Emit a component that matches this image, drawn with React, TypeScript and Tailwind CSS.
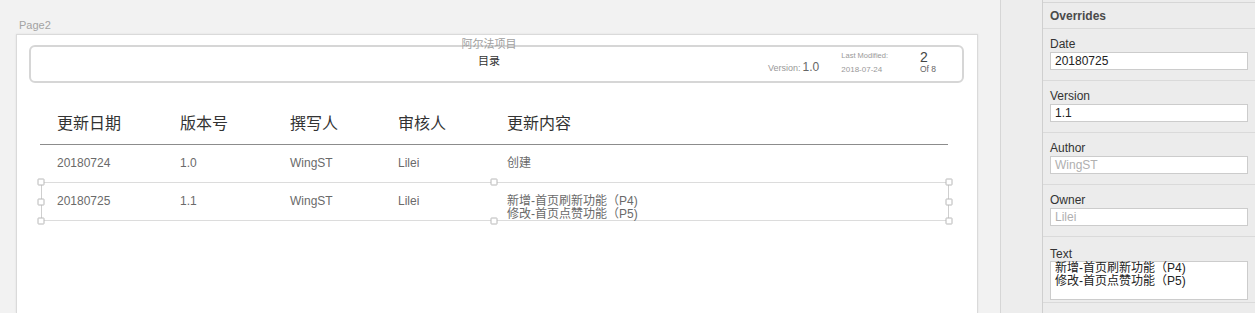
import React from "react";

const FONT = '"Liberation Sans", "Noto Sans CJK SC", sans-serif';

const columns = [
  { key: "date", label: "更新日期", width: "w-[123px]" },
  { key: "version", label: "版本号", width: "w-[110px]" },
  { key: "author", label: "撰写人", width: "w-[108px]" },
  { key: "owner", label: "审核人", width: "w-[109px]" },
  { key: "text", label: "更新内容", width: "flex-1" },
];

const rows = [
  { date: "20180724", version: "1.0", author: "WingST", owner: "Lilei", text: ["创建"] },
  {
    date: "20180725",
    version: "1.1",
    author: "WingST",
    owner: "Lilei",
    text: ["新增-首页刷新功能（P4)", "修改-首页点赞功能（P5)"],
  },
];

function Handle({ className }: { className: string }) {
  return (
    <span
      className={`absolute h-[7px] w-[7px] -translate-x-1/2 -translate-y-1/2 rounded-[1px] border border-[#b8b8b8] bg-white ${className}`}
    />
  );
}

function DocHeader() {
  return (
    <div className="ml-[12px] mr-[13px] mt-[10px] flex h-[38px] items-stretch rounded-[6px] border-2 border-[#d6d6d6]">
      <div className="w-[388px] shrink-0" />
      <div className="-mt-[10px] flex w-[140px] shrink-0 flex-col items-center">
        <span className="text-[11px] leading-[14px] text-[#a0a0a0]">阿尔法项目</span>
        <span className="mt-[3px] text-[11px] leading-[14px] text-[#333]">目录</span>
      </div>
      <div className="flex flex-1 items-end justify-end pb-[6px] pr-[24px]">
        <div className="mr-[22px] flex items-baseline gap-[2px]">
          <span className="text-[9px] text-[#999]">Version:</span>
          <span className="text-[12px] leading-[14px] text-[#666]">1.0</span>
        </div>
        <div className="mr-[32px] flex flex-col pb-[1px]">
          <span className="text-[7.5px] leading-[9px] text-[#999]">Last Modified:</span>
          <span className="mt-[5px] text-[8px] leading-[9px] text-[#999]">2018-07-24</span>
        </div>
        <div className="flex w-[18px] flex-col pb-[1px]">
          <span className="text-[14px] leading-[14px] text-[#444]">2</span>
          <span className="whitespace-nowrap text-[8.5px] leading-[10px] text-[#666]">Of 8</span>
        </div>
      </div>
    </div>
  );
}

function ChangeTable() {
  return (
    <div className="ml-[23px] mt-[31px] w-[908px]">
      <div className="flex border-b border-[#8c8c8c] pb-[10px] pl-[17px]">
        {columns.map((c) => (
          <div key={c.key} className={`${c.width} text-[16px] leading-[20px] text-[#333]`}>
            {c.label}
          </div>
        ))}
      </div>
      {rows.map((r, i) => {
        const selected = i === 1;
        return (
          <div
            key={r.date}
            className={`relative flex h-[38px] border-b border-[#dcdcdc] pl-[17px] text-[12px] text-[#6a6a6a] ${
              selected ? "pt-[12px]" : "pt-[10px]"
            }`}
          >
            {columns.map((c) => (
              <div key={c.key} className={`${c.width} ${selected ? "leading-[13px]" : "leading-[16px]"}`}>
                {c.key === "text"
                  ? r.text.map((t) => <div key={t}>{t}</div>)
                  : (r as Record<string, string | string[]>)[c.key]}
              </div>
            ))}
            {selected ? (
              <div className="pointer-events-none absolute -top-[1px] bottom-[-1px] left-[1px] right-[-1px]">
                <span className="absolute bottom-0 left-0 top-0 w-px bg-[#cfcfcf]" />
                <span className="absolute bottom-0 right-0 top-0 w-px bg-[#cfcfcf]" />
                <Handle className="left-0 top-0" />
                <Handle className="left-0 top-1/2" />
                <Handle className="left-0 top-full" />
                <Handle className="left-[453px] top-0" />
                <Handle className="left-[453px] top-full" />
                <Handle className="left-full top-0" />
                <Handle className="left-full top-1/2" />
                <Handle className="left-full top-full" />
              </div>
            ) : null}
          </div>
        );
      })}
    </div>
  );
}

const fields = [
  { label: "Date", value: "20180725", muted: false },
  { label: "Version", value: "1.1", muted: false },
  { label: "Author", value: "WingST", muted: true },
  { label: "Owner", value: "Lilei", muted: true },
];

function OverridesPanel() {
  return (
    <div className="flex w-[213px] flex-col border-l border-[#cfcfcf] bg-[#ececec]">
      <div className="h-[3px] border-b border-[#d6d6d6] bg-[#ececec]" />
      <div className="flex h-[26px] items-center border-b border-[#d9d9d9] px-[7px] pt-[1px] text-[12px] font-bold text-[#4a4a4a]">
        Overrides
      </div>
      {fields.map((f) => (
        <div key={f.label} className="h-[52px] border-b border-[#dadada] px-[7px] pt-[8px]">
          <div className="text-[12px] leading-[14px] text-[#333]">{f.label}</div>
          <div
            className={`mt-[1px] h-[18px] w-[198px] border border-[#cccccc] bg-white pl-[4px] text-[12px] leading-[16px] ${
              f.muted ? "text-[#b0b0b0]" : "text-[#222]"
            }`}
          >
            {f.value}
          </div>
        </div>
      ))}
      <div className="h-[66px] border-b border-[#dadada] px-[7px] pt-[10px]">
        <div className="text-[12px] leading-[14px] text-[#333]">Text</div>
        <div className="h-[39px] w-[198px] border border-[#cccccc] bg-white pl-[4px] text-[12px] leading-[13px] text-[#222]">
          <div>新增-首页刷新功能（P4)</div>
          <div>修改-首页点赞功能（P5)</div>
        </div>
      </div>
    </div>
  );
}

export default function App() {
  return (
    <div className="flex h-[313px] w-[1255px] overflow-hidden bg-[#f2f2f2]" style={{ fontFamily: FONT }}>
      <div className="flex w-[1000px] flex-col">
        <div className="ml-[19px] h-[34px] pt-[18px] text-[11px] leading-[14px] text-[#a3a3a3]">Page2</div>
        <div className="ml-[16px] w-[962px] flex-1 border border-b-0 border-[#dadada] bg-white shadow-[0_0_2px_rgba(0,0,0,0.08)]">
          <DocHeader />
          <ChangeTable />
        </div>
      </div>
      <div className="w-[42px] border-l border-[#d6d6d6] bg-[#ededed]" />
      <OverridesPanel />
    </div>
  );
}
